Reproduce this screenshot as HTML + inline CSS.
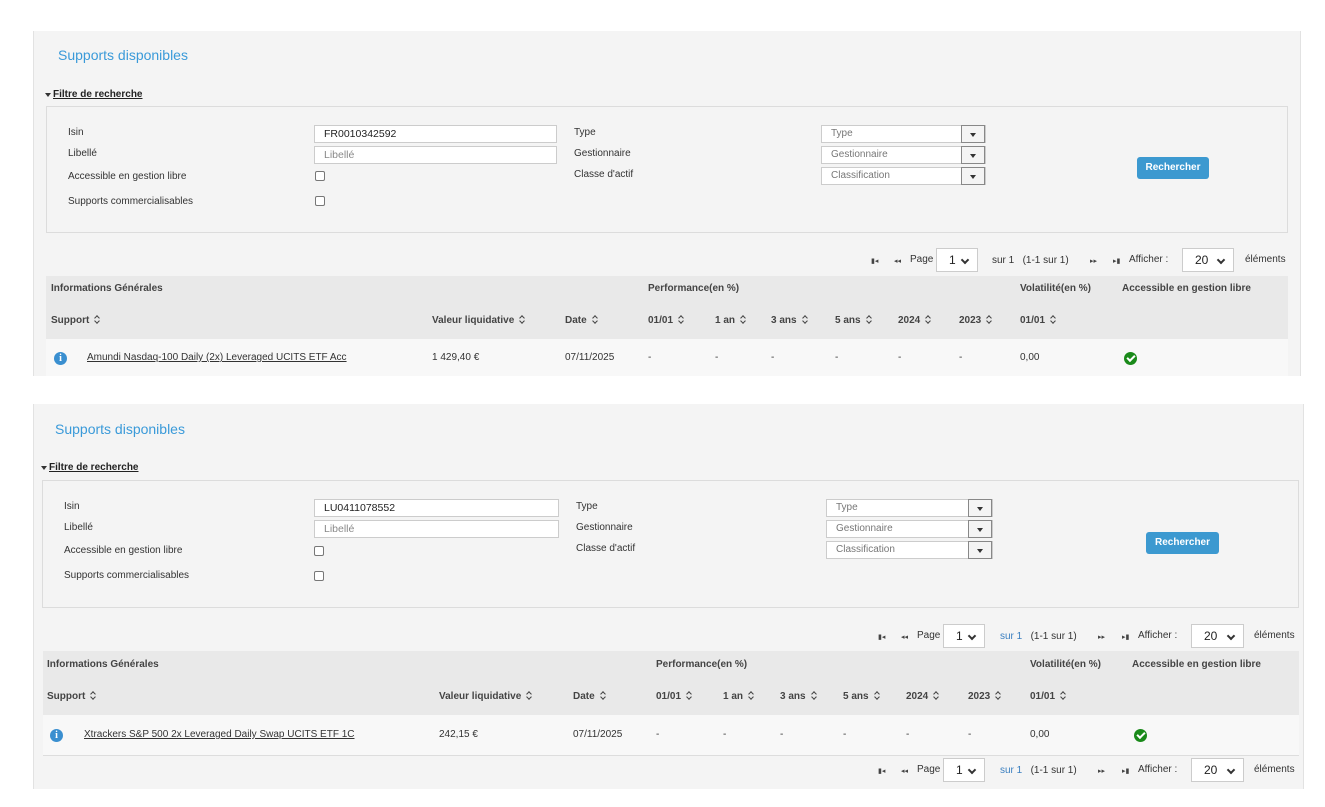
<!DOCTYPE html>
<html><head><meta charset="utf-8"><style>
*{margin:0;padding:0;box-sizing:border-box}
body{width:1325px;height:807px;background:#fff;position:relative;overflow:hidden;font-family:"Liberation Sans",Arial,sans-serif;font-size:10px;color:#333}
.a{position:absolute;white-space:nowrap;line-height:14px}
.p{position:absolute;background:#f4f4f4;border-left:1px solid #e2e2e2;border-right:1px solid #e2e2e2}
.ttl{position:absolute;color:#3a9ad9;font-size:14px;line-height:18px}
.box{position:absolute;border:1px solid #dcdcdc}
.in{position:absolute;background:#fff;border:1px solid #ccc;height:18px;padding-left:9px;line-height:16px;font-size:10.5px}
.cb{position:absolute;width:10px;height:10px;border:1px solid #777;border-radius:2px;background:#fff}
.sel{position:absolute;background:#fff;border:1px solid #ccc;height:18px;padding-left:9px;line-height:16px;color:#777}
.sel i{position:absolute;right:0;top:-1px;width:24px;height:18px;border:1px solid #888;background:#f4f4f4}
.sel i:after{content:"";position:absolute;left:8px;top:7px;border-left:3.5px solid transparent;border-right:3.5px solid transparent;border-top:4px solid #333}
.btn{position:absolute;background:#3c99d0;color:#fff;font-weight:bold;border-radius:3px;text-align:center;line-height:22px;height:22px}
.ps{position:absolute;background:#fff;border:1px solid #ccc;height:24px;line-height:22px;padding-left:12px;font-size:12px;color:#222}
.ps:after{content:"";position:absolute;right:9px;top:8px;width:4px;height:4px;border-right:2px solid #333;border-bottom:2px solid #333;transform:rotate(45deg)}
.hd{position:absolute;background:#e9e9e9}
.row{position:absolute;background:#f8f8f8}
.b{font-weight:bold;color:#444}
.s{display:inline-block;width:6px;height:9px;margin-left:6px;vertical-align:-1px;position:relative}
.s:before,.s:after{content:"";position:absolute;left:0;width:3px;height:3px;border-left:1.3px solid #444;border-top:1.3px solid #444}
.s:before{top:1px;transform:rotate(45deg)}.s:after{top:4px;transform:rotate(225deg)}
.lk{text-decoration:underline;color:#333}
.ic{position:absolute;width:13px;height:13px;border-radius:50%;background:#3a8fd0;color:#fff;font:bold 10px/13px "Liberation Serif",serif;text-align:center}
.ck{position:absolute;width:13px;height:13px;border-radius:50%;background:#1a8a1a}
.ck:after{content:"";position:absolute;left:3px;top:3px;width:6px;height:3px;border-left:2px solid #fff;border-bottom:2px solid #fff;transform:rotate(-45deg)}
.nav{position:absolute;font-size:7px;color:#444;line-height:14px}
.tri{position:absolute;border-left:3px solid transparent;border-right:3px solid transparent;border-top:4px solid #333}
</style></head><body>

<!-- PANEL 1 -->
<div class="p" style="left:33px;top:31px;width:1268px;height:345px"></div>
<div class="ttl" style="left:58px;top:46px">Supports disponibles</div>
<div class="tri" style="left:45px;top:93px"></div>
<div class="a b lk" style="left:53px;top:88px;color:#222">Filtre de recherche</div>
<div class="box" style="left:46px;top:106px;width:1242px;height:127px"></div>
<div class="a" style="left:68px;top:126px">Isin</div>
<div class="a" style="left:68px;top:147px">Libellé</div>
<div class="a" style="left:68px;top:170px">Accessible en gestion libre</div>
<div class="a" style="left:68px;top:195px">Supports commercialisables</div>
<div class="in" style="left:314px;top:125px;width:243px;color:#222">FR0010342592</div>
<div class="in" style="left:314px;top:146px;width:243px;color:#888">Libellé</div>
<div class="cb" style="left:315px;top:171px"></div>
<div class="cb" style="left:315px;top:196px"></div>
<div class="a" style="left:574px;top:126px">Type</div>
<div class="a" style="left:574px;top:147px">Gestionnaire</div>
<div class="a" style="left:574px;top:168px">Classe d'actif</div>
<div class="sel" style="left:821px;top:125px;width:165px">Type<i></i></div>
<div class="sel" style="left:821px;top:146px;width:165px">Gestionnaire<i></i></div>
<div class="sel" style="left:821px;top:167px;width:165px">Classification<i></i></div>
<div class="btn" style="left:1137px;top:157px;width:72px">Rechercher</div>

<div class="nav" style="left:871px;top:255px">▮◂</div>
<div class="nav" style="left:894px;top:255px">◂◂</div>
<div class="a" style="left:910px;top:253px">Page</div>
<div class="ps" style="left:936px;top:248px;width:42px">1</div>
<div class="a" style="left:992px;top:254px">sur 1&nbsp;&nbsp;&nbsp;(1-1 sur 1)</div>
<div class="nav" style="left:1090px;top:255px">▸▸</div>
<div class="nav" style="left:1113px;top:255px">▸▮</div>
<div class="a" style="left:1129px;top:253px">Afficher :</div>
<div class="ps" style="left:1182px;top:248px;width:52px">20</div>
<div class="a" style="left:1245px;top:253px">éléments</div>

<div class="hd" style="left:46px;top:276px;width:1242px;height:63px"></div>
<div class="a b" style="left:51px;top:282px">Informations Générales</div>
<div class="a b" style="left:648px;top:282px">Performance(en %)</div>
<div class="a b" style="left:1020px;top:282px">Volatilité(en %)</div>
<div class="a b" style="left:1122px;top:282px">Accessible en gestion libre</div>
<div class="a b" style="left:51px;top:314px">Support<span class="s"></span></div>
<div class="a b" style="left:432px;top:314px">Valeur liquidative<span class="s"></span></div>
<div class="a b" style="left:565px;top:314px">Date<span class="s"></span></div>
<div class="a b" style="left:648px;top:314px">01/01<span class="s"></span></div>
<div class="a b" style="left:715px;top:314px">1 an<span class="s"></span></div>
<div class="a b" style="left:771px;top:314px">3 ans<span class="s"></span></div>
<div class="a b" style="left:835px;top:314px">5 ans<span class="s"></span></div>
<div class="a b" style="left:898px;top:314px">2024<span class="s"></span></div>
<div class="a b" style="left:959px;top:314px">2023<span class="s"></span></div>
<div class="a b" style="left:1020px;top:314px">01/01<span class="s"></span></div>
<div class="row" style="left:46px;top:339px;width:1242px;height:37px"></div>
<div class="ic" style="left:54px;top:352px">i</div>
<div class="a lk" style="left:87px;top:351px">Amundi Nasdaq-100 Daily (2x) Leveraged UCITS ETF Acc</div>
<div class="a" style="left:432px;top:351px">1 429,40 €</div>
<div class="a" style="left:565px;top:351px">07/11/2025</div>
<div class="a" style="left:648px;top:351px">-</div>
<div class="a" style="left:715px;top:351px">-</div>
<div class="a" style="left:771px;top:351px">-</div>
<div class="a" style="left:835px;top:351px">-</div>
<div class="a" style="left:898px;top:351px">-</div>
<div class="a" style="left:959px;top:351px">-</div>
<div class="a" style="left:1020px;top:351px">0,00</div>
<div class="ck" style="left:1124px;top:352px"></div>

<!-- PANEL 2 -->
<div class="p" style="left:33px;top:404px;width:1271px;height:385px"></div>
<div class="ttl" style="left:55px;top:420px">Supports disponibles</div>
<div class="tri" style="left:41px;top:466px"></div>
<div class="a b lk" style="left:49px;top:461px;color:#222">Filtre de recherche</div>
<div class="box" style="left:42px;top:480px;width:1257px;height:128px"></div>
<div class="a" style="left:64px;top:500px">Isin</div>
<div class="a" style="left:64px;top:521px">Libellé</div>
<div class="a" style="left:64px;top:544px">Accessible en gestion libre</div>
<div class="a" style="left:64px;top:569px">Supports commercialisables</div>
<div class="in" style="left:314px;top:499px;width:245px;color:#222">LU0411078552</div>
<div class="in" style="left:314px;top:520px;width:245px;color:#888">Libellé</div>
<div class="cb" style="left:314px;top:546px"></div>
<div class="cb" style="left:314px;top:571px"></div>
<div class="a" style="left:576px;top:500px">Type</div>
<div class="a" style="left:576px;top:521px">Gestionnaire</div>
<div class="a" style="left:576px;top:542px">Classe d'actif</div>
<div class="sel" style="left:826px;top:499px;width:167px">Type<i></i></div>
<div class="sel" style="left:826px;top:520px;width:167px">Gestionnaire<i></i></div>
<div class="sel" style="left:826px;top:541px;width:167px">Classification<i></i></div>
<div class="btn" style="left:1146px;top:532px;width:73px">Rechercher</div>

<div class="nav" style="left:878px;top:631px">▮◂</div>
<div class="nav" style="left:901px;top:631px">◂◂</div>
<div class="a" style="left:917px;top:629px">Page</div>
<div class="ps" style="left:943px;top:624px;width:42px">1</div>
<div class="a" style="left:1000px;top:630px"><span style="color:#3a7fc0">sur 1</span>&nbsp;&nbsp;&nbsp;(1-1 sur 1)</div>
<div class="nav" style="left:1098px;top:631px">▸▸</div>
<div class="nav" style="left:1122px;top:631px">▸▮</div>
<div class="a" style="left:1138px;top:629px">Afficher :</div>
<div class="ps" style="left:1191px;top:624px;width:53px">20</div>
<div class="a" style="left:1254px;top:629px">éléments</div>

<div class="hd" style="left:43px;top:651px;width:1256px;height:64px"></div>
<div class="a b" style="left:47px;top:658px">Informations Générales</div>
<div class="a b" style="left:656px;top:658px">Performance(en %)</div>
<div class="a b" style="left:1030px;top:658px">Volatilité(en %)</div>
<div class="a b" style="left:1132px;top:658px">Accessible en gestion libre</div>
<div class="a b" style="left:47px;top:690px">Support<span class="s"></span></div>
<div class="a b" style="left:439px;top:690px">Valeur liquidative<span class="s"></span></div>
<div class="a b" style="left:573px;top:690px">Date<span class="s"></span></div>
<div class="a b" style="left:656px;top:690px">01/01<span class="s"></span></div>
<div class="a b" style="left:723px;top:690px">1 an<span class="s"></span></div>
<div class="a b" style="left:780px;top:690px">3 ans<span class="s"></span></div>
<div class="a b" style="left:843px;top:690px">5 ans<span class="s"></span></div>
<div class="a b" style="left:906px;top:690px">2024<span class="s"></span></div>
<div class="a b" style="left:968px;top:690px">2023<span class="s"></span></div>
<div class="a b" style="left:1030px;top:690px">01/01<span class="s"></span></div>
<div class="row" style="left:43px;top:715px;width:1256px;height:41px;border-bottom:1px solid #ddd"></div>
<div class="ic" style="left:50px;top:729px">i</div>
<div class="a lk" style="left:84px;top:728px">Xtrackers S&amp;P 500 2x Leveraged Daily Swap UCITS ETF 1C</div>
<div class="a" style="left:439px;top:728px">242,15 €</div>
<div class="a" style="left:573px;top:728px">07/11/2025</div>
<div class="a" style="left:656px;top:728px">-</div>
<div class="a" style="left:723px;top:728px">-</div>
<div class="a" style="left:780px;top:728px">-</div>
<div class="a" style="left:843px;top:728px">-</div>
<div class="a" style="left:906px;top:728px">-</div>
<div class="a" style="left:968px;top:728px">-</div>
<div class="a" style="left:1030px;top:728px">0,00</div>
<div class="ck" style="left:1134px;top:729px"></div>

<div class="nav" style="left:878px;top:765px">▮◂</div>
<div class="nav" style="left:901px;top:765px">◂◂</div>
<div class="a" style="left:917px;top:763px">Page</div>
<div class="ps" style="left:943px;top:758px;width:42px">1</div>
<div class="a" style="left:1000px;top:764px"><span style="color:#3a7fc0">sur 1</span>&nbsp;&nbsp;&nbsp;(1-1 sur 1)</div>
<div class="nav" style="left:1098px;top:765px">▸▸</div>
<div class="nav" style="left:1122px;top:765px">▸▮</div>
<div class="a" style="left:1138px;top:763px">Afficher :</div>
<div class="ps" style="left:1191px;top:758px;width:53px">20</div>
<div class="a" style="left:1254px;top:763px">éléments</div>
</body></html>
